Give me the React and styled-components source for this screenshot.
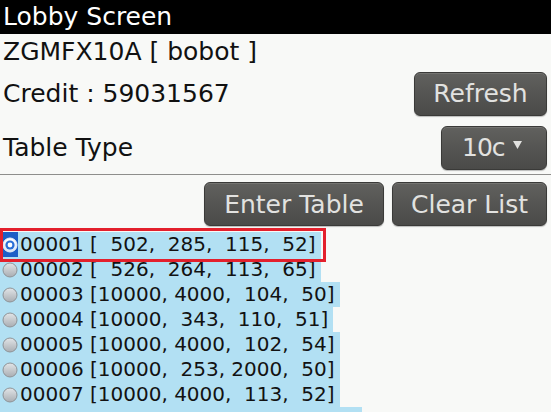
import React from 'react';
import styled, { createGlobalStyle, css } from 'styled-components';

const GlobalStyle = createGlobalStyle`
	html, body {
		margin: 0;
		padding: 0;
		background: #f8f9f7;
	}
	body {
		font-family: "DejaVu Sans", "Liberation Sans", sans-serif;
	}
`;

const Screen = styled.div`
	width: 551px;
	height: 412px;
	overflow: hidden;
	display: flex;
	flex-direction: column;
	background: #f8f9f7;
	color: #111;
`;

const TitleBar = styled.header`
	height: 34px;
	flex: none;
	background: #000;
	color: #fff;
	font-size: 25px;
	line-height: 34px;
	padding-left: 3px;
	white-space: nowrap;
`;

const InfoLine = styled.div`
	height: 36px;
	flex: none;
	font-size: 25px;
	line-height: 36px;
	padding-left: 3px;
	white-space: nowrap;
`;

const FieldRow = styled.div`
	height: ${props => props.$height}px;
	flex: none;
	box-sizing: border-box;
	padding: ${props => props.$top || 0}px 4px 0 3px;
	display: flex;
	align-items: center;
	justify-content: space-between;
	font-size: 25px;
	white-space: nowrap;
`;

const Separator = styled.hr`
	flex: none;
	margin: 0;
	border: 0;
	height: 1px;
	background: #8e8e8c;
`;

const ActionRow = styled.div`
	height: 53px;
	flex: none;
	box-sizing: border-box;
	padding: 7px 4px 0 0;
	display: flex;
	justify-content: flex-end;
	align-items: flex-start;
	gap: 8px;
`;

const Button = styled.button`
	width: ${props => props.$width}px;
	height: 44px;
	box-sizing: border-box;
	border: 1px solid #3a3a38;
	border-radius: 6px;
	background: linear-gradient(#61615e 0%, #565654 45%, #4a4a48 100%);
	box-shadow: inset 0 1px 0 rgba(255, 255, 255, 0.12), 0 1px 1px rgba(0, 0, 0, 0.25);
	color: #e2e2e0;
	font-family: "DejaVu Sans", "Liberation Sans", sans-serif;
	font-size: 25px;
	line-height: 1;
	padding: 0;
	display: flex;
	align-items: center;
	justify-content: center;
	white-space: nowrap;
	cursor: pointer;
`;

const DropButton = styled(Button)`
	justify-content: flex-start;
	padding-left: 20px;
	gap: 8px;
	letter-spacing: -1px;
`;

const Caret = styled.svg`
	width: 9px;
	height: 8px;
	margin-top: -6px;
	flex: none;
`;

const List = styled.ul`
	list-style: none;
	margin: 0;
	padding: 4px 0 0 0;
`;

const Row = styled.li`
	position: relative;
	width: fit-content;
	min-width: ${props => props.$minWidth || 0}px;
	height: 25px;
	display: flex;
	align-items: center;
	padding-right: 5px;
	background: #b2e0f3;
	font-size: 20px;
	line-height: 25px;
	white-space: pre;
	color: #121212;

	${props => props.$focused && css`
		&::after {
			content: '';
			position: absolute;
			left: 0;
			right: -5px;
			top: -4px;
			bottom: -5px;
			border: 3px solid #e3202c;
			z-index: 1;
		}
	`}
`;

const RadioSlot = styled.span`
	width: 20px;
	height: 25px;
	flex: none;
	display: flex;
	align-items: center;
	justify-content: center;
	${props => props.$checked && css`
		background: linear-gradient(90deg, transparent 0, transparent 1px, #1d5fc6 1px, #1d5fc6 18px, transparent 18px);
	`}
`;

function Radio({ checked }) {
	const id = checked ? 'rg-on' : 'rg-off';
	return (
		<RadioSlot $checked={checked}>
			<svg width="16" height="16" viewBox="0 0 16 16">
				<defs>
					<linearGradient id={id} x1="0" y1="0" x2="0" y2="1">
						<stop offset="0" stopColor={checked ? '#ffffff' : '#e2e5e8'} />
						<stop offset="1" stopColor={checked ? '#d8e4f4' : '#a9adb2'} />
					</linearGradient>
				</defs>
				<circle cx="8" cy="8" r="7" fill={`url(#${id})`} stroke={checked ? '#e8eef8' : '#8f9397'} strokeWidth="1" />
				{checked && <circle cx="8" cy="8" r="4.6" fill="#2a6fd6" />}
				{checked && <circle cx="8" cy="8" r="2.4" fill="#ffffff" />}
			</svg>
		</RadioSlot>
	);
}

const tables = [
	{ id: '00001', stats: '[  502,  285,  115,  52]' },
	{ id: '00002', stats: '[  526,  264,  113,  65]' },
	{ id: '00003', stats: '[10000, 4000,  104,  50]' },
	{ id: '00004', stats: '[10000,  343,  110,  51]' },
	{ id: '00005', stats: '[10000, 4000,  102,  54]' },
	{ id: '00006', stats: '[10000,  253, 2000,  50]' },
	{ id: '00007', stats: '[10000, 4000,  113,  52]' },
];

export default function App() {
	return (
		<>
			<GlobalStyle />
			<Screen>
				<TitleBar>Lobby Screen</TitleBar>
				<InfoLine>ZGMFX10A [ bobot ]</InfoLine>
				<FieldRow $height={47}>
					<span>Credit : 59031567</span>
					<Button $width={133}>Refresh</Button>
				</FieldRow>
				<FieldRow $height={57} $top={4}>
					<span>Table Type</span>
					<DropButton $width={106}>
						10c
						<Caret viewBox="0 0 9 8">
							<path d="M0 0 L9 0 L4.5 8 Z" fill="#e2e2e0" />
						</Caret>
					</DropButton>
				</FieldRow>
				<Separator />
				<ActionRow>
					<Button $width={180}>Enter Table</Button>
					<Button $width={155}>Clear List</Button>
				</ActionRow>
				<List>
					{tables.map((t, i) => (
						<Row key={t.id} $focused={i === 0}>
							<Radio checked={i === 0} />
							{t.id} {t.stats}
						</Row>
					))}
					{/* next entry is scrolled below the fold; only its highlight peeks in */}
					<Row $minWidth={357} />
				</List>
			</Screen>
		</>
	);
}
